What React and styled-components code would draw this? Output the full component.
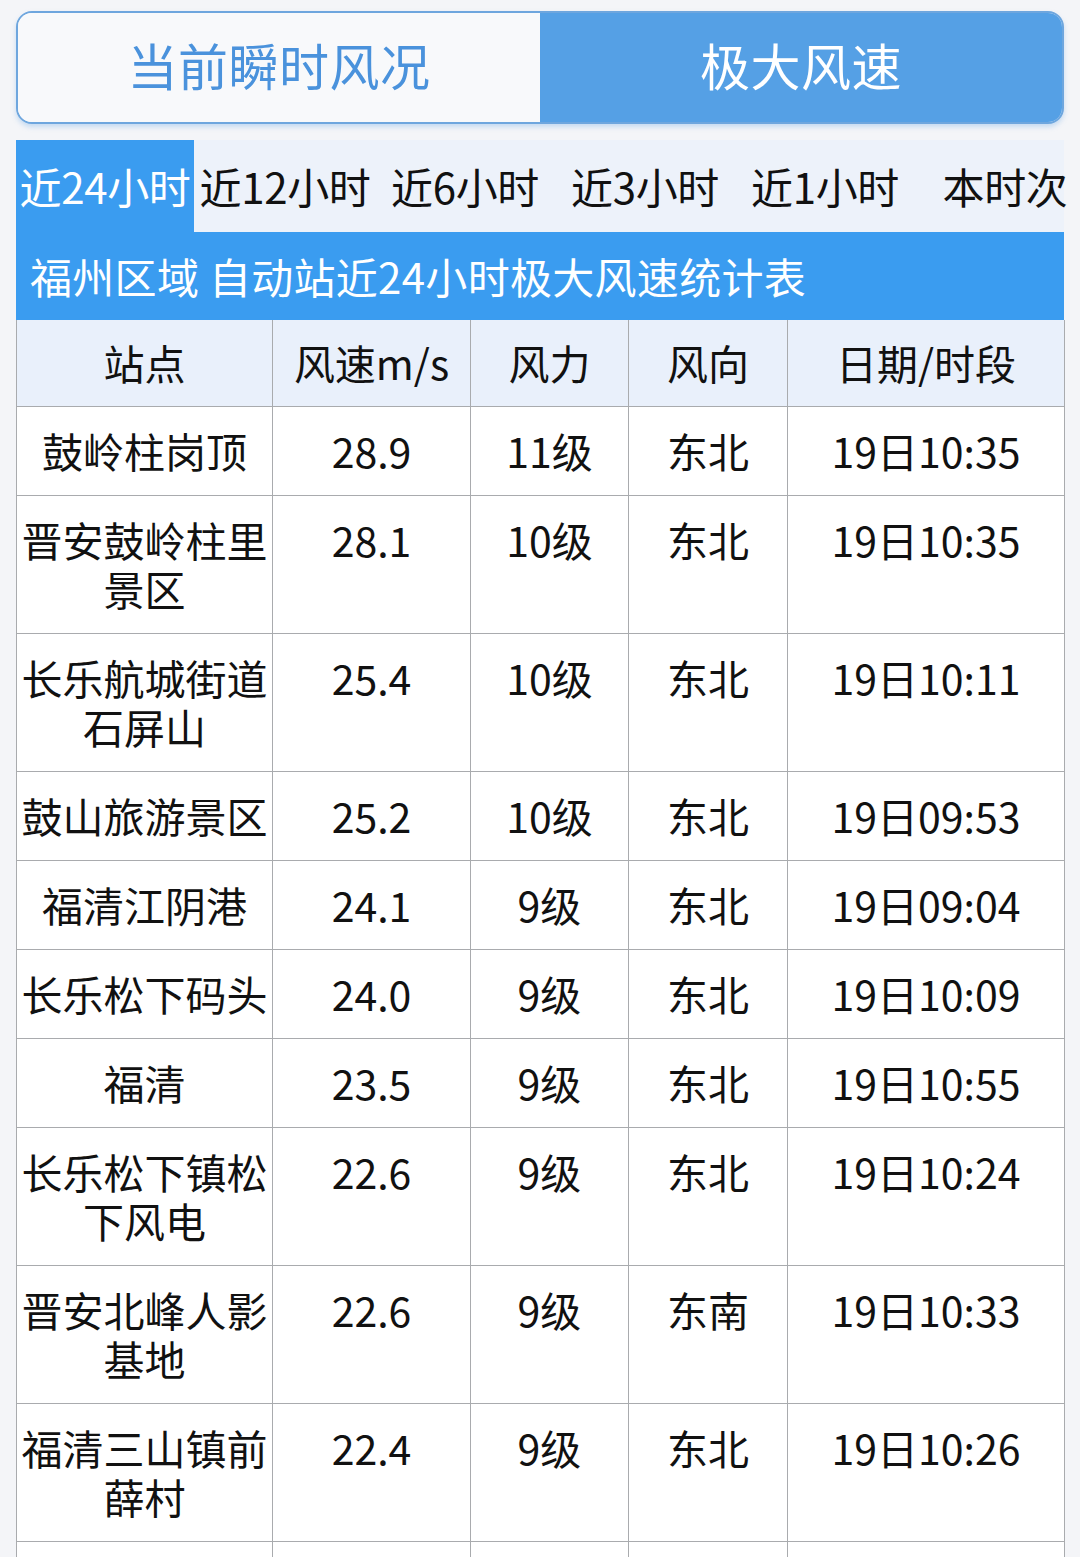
import React from "react";
import styled, { createGlobalStyle } from "styled-components";

const Global = createGlobalStyle`
  html, body { margin: 0; padding: 0; background: #f4f5f8; }
  body { font-family: "Noto Sans CJK SC", "Noto Sans", sans-serif; color: #111; }
`;

const Page = styled.div`
  padding: 11px 16px 0 16px;
  display: flex;
  flex-direction: column;
`;

const TabBar = styled.div`
  display: flex;
  height: 113px;
  border: 2px solid #6ea6de;
  border-radius: 16px;
  overflow: hidden;
  box-sizing: border-box;
  box-shadow: 0 3px 5px rgba(110, 170, 230, 0.35);
  background: #f8f9fb;
`;

const Tab = styled.div`
  flex: 1;
  display: flex;
  align-items: center;
  justify-content: center;
  padding-bottom: 7px;
  font-size: 50px;
  letter-spacing: 0.5px;
  background: ${(p) => (p.$active ? "#55a0e5" : "#f8f9fb")};
  color: ${(p) => (p.$active ? "#ffffff" : "#4a92dc")};
`;

const Periods = styled.div`
  margin-top: 16px;
  height: 92px;
  background: #edf2fa;
  display: grid;
  grid-template-columns: repeat(6, 178px);
  column-gap: 2px;
  align-items: stretch;
  white-space: nowrap;
`;

const Period = styled.div`
  display: flex;
  align-items: center;
  justify-content: center;
  padding-bottom: 2px;
  font-size: 42px;
  letter-spacing: -0.3px;
  background: ${(p) => (p.$active ? "#3a9cf0" : "transparent")};
  color: ${(p) => (p.$active ? "#ffffff" : "#111")};
`;

const TitleBar = styled.div`
  height: 88px;
  background: #3a9cf0;
  color: #fff;
  font-size: 42px;
  display: flex;
  align-items: center;
  padding-left: 14px;
  padding-bottom: 2px;
  box-sizing: border-box;
  letter-spacing: 0.3px;
  white-space: nowrap;
`;

const Table = styled.table`
  width: 100%;
  border-collapse: collapse;
  table-layout: fixed;
  background: #fff;
`;

const Col = styled.col`
  width: ${(p) => p.$w}px;
`;

const HeadCell = styled.th`
  font-weight: normal;
  font-size: 41px;
  line-height: 49px;
  padding: 18px 2px 19px;
  background: #e9f0fb;
  border: 1px solid #a9abae;
  border-top: none;
  text-align: center;
  vertical-align: top;
  white-space: nowrap;
`;

const Cell = styled.td`
  font-size: 41px;
  line-height: 49px;
  height: 49px;
  padding: 19px 2px 20px;
  border: 1px solid #a9abae;
  text-align: center;
  vertical-align: top;
  word-break: break-all;
`;

const rows = [
  ["鼓岭柱岗顶", "28.9", "11级", "东北", "19日10:35"],
  ["晋安鼓岭柱里景区", "28.1", "10级", "东北", "19日10:35"],
  ["长乐航城街道石屏山", "25.4", "10级", "东北", "19日10:11"],
  ["鼓山旅游景区", "25.2", "10级", "东北", "19日09:53"],
  ["福清江阴港", "24.1", "9级", "东北", "19日09:04"],
  ["长乐松下码头", "24.0", "9级", "东北", "19日10:09"],
  ["福清", "23.5", "9级", "东北", "19日10:55"],
  ["长乐松下镇松下风电", "22.6", "9级", "东北", "19日10:24"],
  ["晋安北峰人影基地", "22.6", "9级", "东南", "19日10:33"],
  ["福清三山镇前薛村", "22.4", "9级", "东北", "19日10:26"],
  ["", "", "", "", ""],
];

const periods = ["近24小时", "近12小时", "近6小时", "近3小时", "近1小时", "本时次"];
const widths = [256, 198, 158, 159, 277];
const heads = ["站点", "风速m/s", "风力", "风向", "日期/时段"];

export default function App() {
  return (
    <>
      <Global />
      <Page>
        <TabBar>
          <Tab>当前瞬时风况</Tab>
          <Tab $active>极大风速</Tab>
        </TabBar>
        <Periods>
          {periods.map((p, i) => (
            <Period key={p} $active={i === 0}>
              {p}
            </Period>
          ))}
        </Periods>
        <TitleBar>福州区域 自动站近24小时极大风速统计表</TitleBar>
        <Table>
          <colgroup>
            {widths.map((w, i) => (
              <Col key={i} $w={w} />
            ))}
          </colgroup>
          <thead>
            <tr>
              {heads.map((h) => (
                <HeadCell key={h}>{h}</HeadCell>
              ))}
            </tr>
          </thead>
          <tbody>
            {rows.map((r, i) => (
              <tr key={i}>
                {r.map((c, j) => (
                  <Cell key={j}>{c}</Cell>
                ))}
              </tr>
            ))}
          </tbody>
        </Table>
      </Page>
    </>
  );
}
